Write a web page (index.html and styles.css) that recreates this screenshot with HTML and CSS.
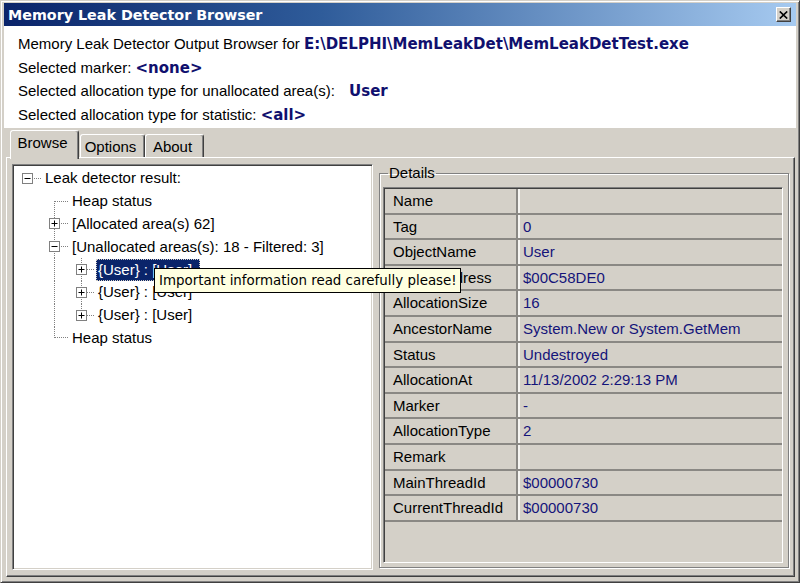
FILE: index.html
```html
<!DOCTYPE html>
<html>
<head>
<meta charset="utf-8">
<title>Memory Leak Detector Browser</title>
<link rel="stylesheet" href="styles.css">
</head>
<body>
<div class="win">
  <div class="titlebar">
    <span class="title">Memory Leak Detector Browser</span>
    <span class="close"><svg width="9" height="8" viewBox="0 0 9 8"><path d="M0.8 0.5 L8.2 7.5 M8.2 0.5 L0.8 7.5" stroke="#000" stroke-width="1.7"/></svg></span>
  </div>
  <div class="header">
    <div class="hl">Memory Leak Detector Output Browser for <b class="val">E:\DELPHI\MemLeakDet\MemLeakDetTest.exe</b></div>
    <div class="hl">Selected marker: <b class="val">&lt;none&gt;</b></div>
    <div class="hl">Selected allocation type for unallocated area(s): <b class="val wide">User</b></div>
    <div class="hl">Selected allocation type for statistic: <b class="val">&lt;all&gt;</b></div>
  </div>
  <div class="tabs">
    <div class="tab active">Browse</div>
    <div class="tab t-options">Options</div>
    <div class="tab t-about">About</div>
  </div>
  <div class="page">
    <div class="tree">
      <div class="row"><span class="br br-h"><svg class="bx" width="11" height="11" viewBox="0 0 11 11"><rect x="0.5" y="0.5" width="10" height="10" fill="#fff" stroke="#808080"/><path d="M2.5 5.5h6" stroke="#000"/></svg></span><span class="tx">Leak detector result:</span></div>
      <div class="row"><span class="g"></span><span class="br br-first"></span><span class="tx">Heap status</span></div>
      <div class="row"><span class="g"></span><span class="br br-mid"><svg class="bx" width="11" height="11" viewBox="0 0 11 11"><rect x="0.5" y="0.5" width="10" height="10" fill="#fff" stroke="#808080"/><path d="M2.5 5.5h6M5.5 2.5v6" stroke="#000"/></svg></span><span class="tx">[Allocated area(s) 62]</span></div>
      <div class="row"><span class="g"></span><span class="br br-mid"><svg class="bx" width="11" height="11" viewBox="0 0 11 11"><rect x="0.5" y="0.5" width="10" height="10" fill="#fff" stroke="#808080"/><path d="M2.5 5.5h6" stroke="#000"/></svg></span><span class="tx">[Unallocated areas(s): 18 - Filtered: 3]</span></div>
      <div class="row"><span class="g"></span><span class="g g-v"></span><span class="br br-mid br-n"><svg class="bx" width="11" height="11" viewBox="0 0 11 11"><rect x="0.5" y="0.5" width="10" height="10" fill="#fff" stroke="#808080"/><path d="M2.5 5.5h6M5.5 2.5v6" stroke="#000"/></svg></span><span class="tx sel">{User} : [User]</span></div>
      <div class="row"><span class="g"></span><span class="g g-v"></span><span class="br br-mid br-n"><svg class="bx" width="11" height="11" viewBox="0 0 11 11"><rect x="0.5" y="0.5" width="10" height="10" fill="#fff" stroke="#808080"/><path d="M2.5 5.5h6M5.5 2.5v6" stroke="#000"/></svg></span><span class="tx">{User} : [User]</span></div>
      <div class="row"><span class="g"></span><span class="g g-v"></span><span class="br br-last br-n"><svg class="bx" width="11" height="11" viewBox="0 0 11 11"><rect x="0.5" y="0.5" width="10" height="10" fill="#fff" stroke="#808080"/><path d="M2.5 5.5h6M5.5 2.5v6" stroke="#000"/></svg></span><span class="tx">{User} : [User]</span></div>
      <div class="row"><span class="g"></span><span class="br br-last"></span><span class="tx">Heap status</span></div>
    </div>
    <fieldset class="details">
      <legend>Details</legend>
      <div class="grid">
        <div class="gr"><span class="gk">Name</span><span class="gv"></span></div>
        <div class="gr"><span class="gk">Tag</span><span class="gv">0</span></div>
        <div class="gr"><span class="gk">ObjectName</span><span class="gv">User</span></div>
        <div class="gr"><span class="gk">ObjectAddress</span><span class="gv">$00C58DE0</span></div>
        <div class="gr"><span class="gk">AllocationSize</span><span class="gv">16</span></div>
        <div class="gr"><span class="gk">AncestorName</span><span class="gv">System.New or System.GetMem</span></div>
        <div class="gr"><span class="gk">Status</span><span class="gv">Undestroyed</span></div>
        <div class="gr"><span class="gk">AllocationAt</span><span class="gv">11/13/2002 2:29:13 PM</span></div>
        <div class="gr"><span class="gk">Marker</span><span class="gv">-</span></div>
        <div class="gr"><span class="gk">AllocationType</span><span class="gv">2</span></div>
        <div class="gr"><span class="gk">Remark</span><span class="gv"></span></div>
        <div class="gr"><span class="gk">MainThreadId</span><span class="gv">$00000730</span></div>
        <div class="gr"><span class="gk">CurrentThreadId</span><span class="gv">$00000730</span></div>
      </div>
    </fieldset>
  </div>
</div>
<div class="tooltip">Important information read carefully please!</div>
</body>
</html>
```

FILE: styles.css
```css
html, body {
  margin: 0;
  padding: 0;
}
body {
  width: 800px;
  height: 583px;
  overflow: hidden;
  background: #d4d0c8;
  font: 15px/18px "Liberation Sans", Arial, sans-serif;
  color: #000;
}
.win {
  box-sizing: border-box;
  width: 800px;
  height: 583px;
  border: 1px solid;
  border-color: #d4d0c8 #404040 #404040 #d4d0c8;
  box-shadow: inset 1px 1px 0 #fff, inset -1px -1px 0 #808080;
  padding: 2px 3px 5px 3px;
  background: #d4d0c8;
}
.titlebar {
  height: 23px;
  display: flex;
  align-items: center;
  justify-content: space-between;
  padding: 0 5px 0 4px;
  background: linear-gradient(90deg, #0a246a 0%, #2f5c9a 40%, #a6caf0 100%);
}
.title {
  font: bold 14.3px/18px "DejaVu Sans", Verdana, sans-serif;
  color: #fff;
}
.close {
  box-sizing: border-box;
  width: 15px;
  height: 15px;
  display: flex;
  align-items: center;
  justify-content: center;
  background: #d4d0c8;
  border: 1px solid;
  border-color: #fff #404040 #404040 #fff;
  box-shadow: inset -1px -1px 0 #808080;
}
.header {
  height: 102px;
  box-sizing: border-box;
  background: #fff;
  padding: 6px 0 0 14px;
}
.hl {
  height: 23.5px;
  line-height: 23.5px;
  white-space: nowrap;
}
.val {
  font: bold 15px/23.5px "DejaVu Sans", Verdana, sans-serif;
  color: #10106e;
}
.wide {
  margin-left: 10px;
}
.tabs {
  height: 29px;
  display: flex;
  align-items: flex-end;
  padding-left: 6px;
}
.tab {
  box-sizing: border-box;
  height: 23px;
  border: 1px solid;
  border-bottom: 0;
  border-color: #fff #404040 transparent #fff;
  border-radius: 3px 3px 0 0;
  box-shadow: inset -1px 0 0 #808080;
  padding: 3px 4px 0 0;
  text-align: center;
  background: #d4d0c8;
}
.tab.active {
  width: 69px;
  height: 29px;
  margin-bottom: -2px;
  position: relative;
  z-index: 1;
}
.t-options {
  width: 65px;
  margin-left: 1px;
}
.t-about {
  width: 59px;
}
.page {
  box-sizing: border-box;
  height: 420px;
  margin: 0 1px 0 2px;
  border: 1px solid;
  border-color: #fff #404040 #404040 #fff;
  box-shadow: inset -1px -1px 0 #808080;
  padding: 6px 4px 0 5px;
  display: flex;
  align-items: flex-start;
  gap: 6px;
}
.tree {
  box-sizing: border-box;
  width: 361px;
  height: 406px;
  flex: none;
  background: #fff;
  border: 1px solid;
  border-color: #808080 #fff #fff #808080;
  box-shadow: inset 1px 1px 0 #404040, inset -1px -1px 0 #d4d0c8;
  padding: 2px 0 0 1px;
}
.row {
  height: 22.8px;
  display: flex;
  align-items: center;
  white-space: nowrap;
}
.g, .br {
  flex: none;
  width: 27px;
  height: 100%;
  display: flex;
  align-items: center;
  justify-content: center;
  background-repeat: no-repeat;
}
.br-n {
  width: 26px;
}
.bx {
  display: block;
}
.br-h {
  background-image: repeating-linear-gradient(90deg, #808080 0 1px, transparent 1px 2px);
  background-size: 50% 1px;
  background-position: right center;
}
.br-first {
  background-image: repeating-linear-gradient(90deg, #808080 0 1px, transparent 1px 2px), repeating-linear-gradient(180deg, #808080 0 1px, transparent 1px 2px);
  background-size: 50% 1px, 1px 50%;
  background-position: right center, 13px 100%;
}
.br-mid {
  background-image: repeating-linear-gradient(90deg, #808080 0 1px, transparent 1px 2px), repeating-linear-gradient(180deg, #808080 0 1px, transparent 1px 2px);
  background-size: 50% 1px, 1px 100%;
  background-position: right center, 13px 0;
}
.br-last {
  background-image: repeating-linear-gradient(90deg, #808080 0 1px, transparent 1px 2px), repeating-linear-gradient(180deg, #808080 0 1px, transparent 1px 2px);
  background-size: 50% 1px, 1px 50%;
  background-position: right center, 13px 0;
}
.g-v {
  background-image: repeating-linear-gradient(180deg, #808080 0 1px, transparent 1px 2px);
  background-size: 1px 100%;
  background-position: 13px 0;
}
.tx {
  margin-left: 2px;
  padding: 0 2px;
  line-height: 22px;
}
.tx.sel {
  background: #0a246a;
  color: #fff;
  outline: 1px dotted #d4d0c8;
  outline-offset: -1px;
  padding-right: 8px;
}
.details {
  box-sizing: border-box;
  width: 410px;
  height: 403px;
  flex: none;
  margin: 1px 0 0 0;
  padding: 6px 5px 3px 3px;
  border: 1px solid #808080;
  box-shadow: inset 1px 1px 0 #fff, 1px 1px 0 #fff;
  min-width: 0;
}
.details legend {
  padding: 0 1px;
  margin-left: 5px;
  line-height: 16px;
}
.grid {
  box-sizing: border-box;
  width: 400px;
  height: 376px;
  border: 1px solid;
  border-color: #808080 #fff #fff #808080;
  box-shadow: inset 1px 1px 0 #404040, inset -1px -1px 0 #d4d0c8;
  padding: 1px 0 0 1px;
  background: #d4d0c8;
}
.gr {
  box-sizing: border-box;
  height: 25.6px;
  display: flex;
  border-bottom: 2px solid #8a8884;
}
.gk {
  box-sizing: border-box;
  width: 133px;
  flex: none;
  padding-left: 8px;
  border-right: 2px solid #8a8884;
  line-height: 23.6px;
  white-space: nowrap;
}
.gv {
  flex: 1;
  padding-left: 5px;
  box-shadow: inset 2px 0 0 #f6f5f2;
  color: #14147a;
  line-height: 23.6px;
  white-space: nowrap;
}
.tooltip {
  position: absolute;
  left: 154px;
  top: 268px;
  box-sizing: border-box;
  width: 307px;
  height: 25px;
  background: #ffffe1;
  border: 1px solid #000;
  padding-left: 4px;
  font: 13.4px/24px "DejaVu Sans", Verdana, sans-serif;
  color: #000;
  white-space: nowrap;
}
```
